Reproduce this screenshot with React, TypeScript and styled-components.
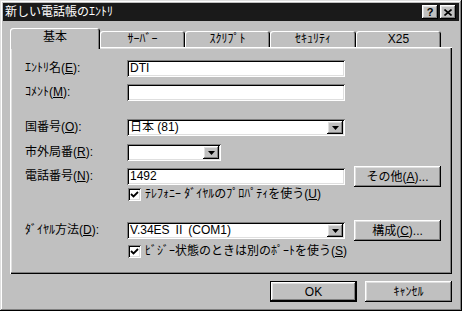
import React from 'react';
import styled, { createGlobalStyle } from 'styled-components';

const GlobalStyle = createGlobalStyle`
    html, body {
        margin: 0;
        padding: 0;
        background: #c0c0c0;
    }
    body {
        font-family: "Liberation Sans", "Noto Sans CJK JP", sans-serif;
        font-size: 12px;
        color: #000;
    }
    * {
        box-sizing: border-box;
    }
`;

const raised = `
    box-shadow: inset -1px -1px #000, inset 1px 1px #fff, inset -2px -2px #808080, inset 2px 2px #dfdfdf;
`;

const sunken = `
    box-shadow: inset 1px 1px #808080, inset -1px -1px #fff, inset 2px 2px #000, inset -2px -2px #dfdfdf;
`;

const tabs = ['基本', 'ｻｰﾊﾞｰ', 'ｽｸﾘﾌﾟﾄ', 'ｾｷｭﾘﾃｨ', 'X25'];
const tabWidths = [90, 85, 85, 86, 85];

const DropArrow = () => (
    <svg width="7" height="4" viewBox="0 0 7 4">
        <polygon points="0,0 7,0 3.5,4" fill="#000" />
    </svg>
);

const CheckMark = () => (
    <svg width="9" height="9" viewBox="0 0 9 9">
        <path d="M1 4 L3.5 6.5 L8 2" stroke="#000" strokeWidth="1.8" fill="none" />
    </svg>
);

const CloseGlyph = () => (
    <svg width="8" height="7" viewBox="0 0 8 7">
        <path d="M0.5 0.5 L7.5 6.5 M7.5 0.5 L0.5 6.5" stroke="#000" strokeWidth="1.6" />
    </svg>
);

const Select = ({ width, value }: { width: number; value: string }) => (
    <SelectBox $w={width}>
        <SelectValue>{value}</SelectValue>
        <DropButton>
            <DropArrow />
        </DropButton>
    </SelectBox>
);

const App = () => {
    return (
        <>
            <GlobalStyle />
            <Window>
                <TitleBar>
                    <TitleText>新しい電話帳のｴﾝﾄﾘ</TitleText>
                    <TitleButtons>
                        <TitleButton>
                            <HelpGlyph>?</HelpGlyph>
                        </TitleButton>
                        <TitleButton>
                            <CloseGlyph />
                        </TitleButton>
                    </TitleButtons>
                </TitleBar>
                <Body>
                    <TabRow>
                        {tabs.map((t, i) => (
                            <Tab key={t} $active={i === 0} $w={tabWidths[i]}>
                                {t}
                            </Tab>
                        ))}
                    </TabRow>
                    <Panel>
                        <Row $mt={13}>
                            <Label>
                                ｴﾝﾄﾘ名(<u>E</u>):
                            </Label>
                            <Field $w={218}>DTI</Field>
                        </Row>
                        <Row $mt={7}>
                            <Label>
                                ｺﾒﾝﾄ(<u>M</u>):
                            </Label>
                            <Field $w={218} />
                        </Row>
                        <Row $mt={18}>
                            <Label>
                                国番号(<u>O</u>):
                            </Label>
                            <Select width={218} value="日本 (81)" />
                        </Row>
                        <Row $mt={8}>
                            <Label>
                                市外局番(<u>R</u>):
                            </Label>
                            <Select width={94} value="" />
                        </Row>
                        <Row $mt={5} $h={21}>
                            <Label>
                                電話番号(<u>N</u>):
                            </Label>
                            <Field $w={218}>1492</Field>
                            <Button $side>
                                その他(<u>A</u>)...
                            </Button>
                        </Row>
                        <CheckRow $mt={1}>
                            <CheckBox>
                                <CheckMark />
                            </CheckBox>
                            <span>
                                ﾃﾚﾌｫﾆｰ ﾀﾞｲﾔﾙのﾌﾟﾛﾊﾟﾃｨを使う(<u>U</u>)
                            </span>
                        </CheckRow>
                        <Row $mt={19} $h={21}>
                            <Label>
                                ﾀﾞｲﾔﾙ方法(<u>D</u>):
                            </Label>
                            <Select width={218} value="V.34ES Ⅱ (COM1)" />
                            <Button $side>
                                構成(<u>C</u>)...
                            </Button>
                        </Row>
                        <CheckRow $mt={4}>
                            <CheckBox>
                                <CheckMark />
                            </CheckBox>
                            <span>
                                ﾋﾞｼﾞｰ状態のときは別のﾎﾟｰﾄを使う(<u>S</u>)
                            </span>
                        </CheckRow>
                    </Panel>
                    <Footer>
                        <Button $default>OK</Button>
                        <Button>ｷｬﾝｾﾙ</Button>
                    </Footer>
                </Body>
            </Window>
        </>
    );
};

export default App;

const Window = styled.div`
    width: 462px;
    height: 311px;
    padding: 3px;
    background: #c0c0c0;
    box-shadow: inset -1px -1px #000, inset 1px 1px #dfdfdf, inset -2px -2px #808080, inset 2px 2px #fff;
    display: flex;
    flex-direction: column;
`;

const TitleBar = styled.div`
    height: 18px;
    background: #1a1a1a;
    color: #fff;
    display: flex;
    align-items: center;
    justify-content: space-between;
    padding: 0 3px 0 2px;
`;

const TitleText = styled.div`
    font-size: 12px;
    line-height: 18px;
    white-space: nowrap;
`;

const TitleButtons = styled.div`
    display: flex;
    gap: 2px;
`;

const TitleButton = styled.div`
    width: 16px;
    height: 14px;
    background: #c0c0c0;
    ${raised}
    display: flex;
    align-items: center;
    justify-content: center;
`;

const HelpGlyph = styled.span`
    font-weight: 700;
    font-size: 11px;
    line-height: 11px;
    color: #000;
`;

const Body = styled.div`
    flex: 1;
    padding: 7px 7px 0 7px;
    display: flex;
    flex-direction: column;
`;

const TabRow = styled.div`
    display: flex;
    align-items: flex-end;
    height: 19px;
    position: relative;
    z-index: 1;
`;

const Tab = styled.div<{ $active?: boolean; $w: number }>`
    width: ${(p) => p.$w}px;
    height: ${(p) => (p.$active ? 21 : 16)}px;
    margin-bottom: ${(p) => (p.$active ? -2 : 0)}px;
    padding-bottom: ${(p) => (p.$active ? 4 : 0)}px;
    background: #c0c0c0;
    border-radius: 3px 3px 0 0;
    box-shadow: inset 1px 1px #fff, inset -1px 0 #000, inset -2px 0 #808080;
    display: flex;
    align-items: center;
    justify-content: center;
    white-space: nowrap;
    line-height: 14px;
`;

const Panel = styled.div`
    width: 442px;
    height: 227px;
    padding-left: 15px;
    background: #c0c0c0;
    box-shadow: inset 1px 1px #fff, inset -1px -1px #000, inset -2px -2px #808080, inset 2px 2px #dfdfdf;
    display: flex;
    flex-direction: column;
`;

const Row = styled.div<{ $mt: number; $h?: number }>`
    display: flex;
    align-items: center;
    margin-top: ${(p) => p.$mt}px;
    height: ${(p) => p.$h ?? 17}px;
`;

const Label = styled.div`
    width: 102px;
    flex: none;
    white-space: nowrap;
    line-height: 17px;
`;

const Field = styled.div<{ $w: number }>`
    width: ${(p) => p.$w}px;
    height: 17px;
    flex: none;
    background: #fff;
    ${sunken}
    padding-left: 3px;
    display: flex;
    align-items: center;
    line-height: 13px;
    white-space: nowrap;
`;

const SelectBox = styled.div<{ $w: number }>`
    width: ${(p) => p.$w}px;
    height: 17px;
    flex: none;
    background: #fff;
    ${sunken}
    padding: 2px;
    display: flex;
    align-items: stretch;
`;

const SelectValue = styled.div`
    flex: 1;
    padding-left: 1px;
    display: flex;
    align-items: center;
    line-height: 13px;
    white-space: nowrap;
`;

const DropButton = styled.div`
    width: 16px;
    background: #c0c0c0;
    ${raised}
    display: flex;
    align-items: center;
    justify-content: center;
`;

const Button = styled.div<{ $default?: boolean; $side?: boolean }>`
    width: 87px;
    height: 21px;
    flex: none;
    margin-left: ${(p) => (p.$side ? 9 : 0)}px;
    background: #c0c0c0;
    ${(p) =>
        p.$default
            ? `border: 1px solid #000;
               box-shadow: inset -1px -1px #000, inset 1px 1px #fff, inset -2px -2px #808080, inset 2px 2px #dfdfdf;`
            : raised}
    display: flex;
    align-items: center;
    justify-content: center;
    white-space: nowrap;
    line-height: 14px;
`;

const CheckRow = styled.div<{ $mt: number }>`
    display: flex;
    align-items: center;
    gap: 4px;
    height: 13px;
    margin-top: ${(p) => p.$mt}px;
    padding-left: 103px;
    white-space: nowrap;
    line-height: 13px;
`;

const CheckBox = styled.div`
    width: 13px;
    height: 13px;
    flex: none;
    background: #fff;
    ${sunken}
    display: flex;
    align-items: center;
    justify-content: center;
`;

const Footer = styled.div`
    display: flex;
    justify-content: flex-end;
    gap: 8px;
    padding-top: 7px;
`;
